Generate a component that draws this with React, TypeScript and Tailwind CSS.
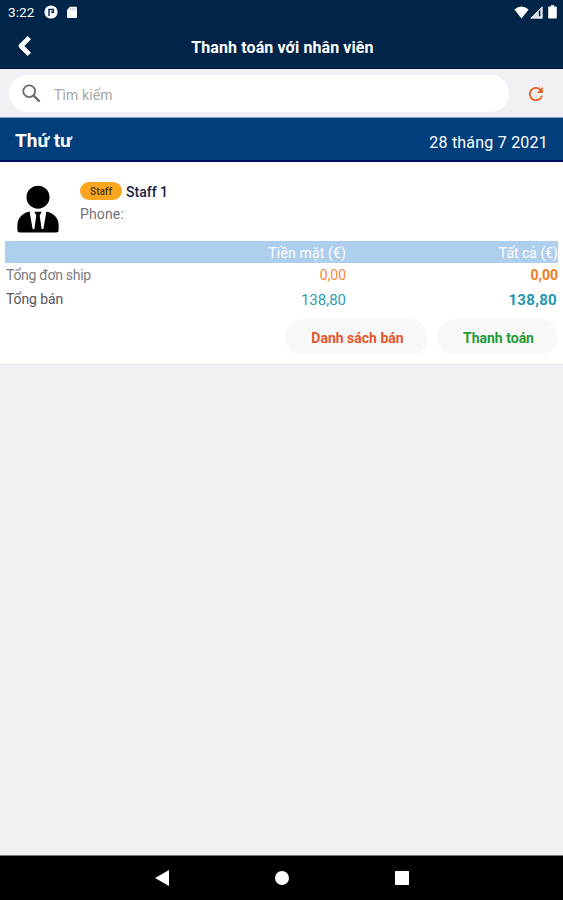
import React from "react";

function StatusBar() {
  return (
    <div className="flex h-6 items-center justify-between pl-2 pr-[6px] text-white">
      <div className="flex items-center">
        <span className="w-[27px] whitespace-nowrap text-[13.5px] leading-6 tracking-[0.1px]">3:22</span>
        <svg className="ml-[9px]" width="14" height="14" viewBox="0 0 14 14">
          <circle cx="7" cy="7" r="6.6" fill="#fff" />
          <path d="M5 11V4.5H9.4V7.2H7.2" fill="none" stroke="#002548" strokeWidth="1.4" />
        </svg>
        <svg className="ml-[8px]" width="12" height="13" viewBox="0 0 12 13">
          <path d="M4 .8H10Q11 .8 11 1.8V11Q11 12 10 12H2Q1 12 1 11V4Z" fill="#fff" />
          <path d="M4.5 2.2V4M6.6 2.2V4M8.7 2.2V4" stroke="#93a3b5" strokeWidth=".7" />
        </svg>
      </div>
      <div className="flex items-center">
        <svg width="15" height="13" viewBox="0 0 15 13">
          <path d="M.4 3.4Q7.4 -2.2 14.6 3.4L7.5 12.6Z" fill="#fff" />
        </svg>
        <svg className="ml-px" width="13" height="13" viewBox="0 0 13 13">
          <path d="M12.2 .8V12.2H.8Z" fill="#d8dde4" stroke="#fff" strokeWidth=".8" />
          <path d="M9.6 4.6V10.2" stroke="#002548" strokeWidth="1.5" />
        </svg>
        <svg className="ml-[5px]" width="9" height="14" viewBox="0 0 9 14">
          <path d="M3 0H6V1.4H8Q8.8 1.4 8.8 2.2V12.8Q8.8 13.6 8 13.6H1Q.2 13.6 .2 12.8V2.2Q.2 1.4 1 1.4H3Z" fill="#fff" />
        </svg>
      </div>
    </div>
  );
}

function Avatar() {
  return (
    <svg width="42" height="48" viewBox="0 0 42 48">
      <circle cx="21" cy="12.2" r="11.5" fill="#000" />
      <path d="M12.5 26.5C5 28.5.4 33 .4 40V45Q.4 47.5 3 47.5H39Q41.6 47.5 41.6 45V40C41.6 33 37 28.5 29.5 26.5Z" fill="#000" />
      <path d="M12.5 26 15.6 44H26.4L29.5 26Z" fill="#fff" />
      <path d="M17.4 26.8H24.6L22.7 30.6 24.6 44H17.4L19.3 30.6Z" fill="#000" />
    </svg>
  );
}

export default function App() {
  return (
    <div className="flex h-[900px] w-full flex-col overflow-hidden bg-[#f0f0f5] font-['Roboto',sans-serif]">
      <header className="h-[69px] shrink-0 border-b border-[#001638] bg-[#002548]">
        <StatusBar />
        <div className="grid h-11 grid-cols-[60px_1fr_60px] items-center">
          <svg className="ml-[17px]" width="15" height="22" viewBox="0 0 15 22">
            <path d="M12.3 2.6 4 11 12.3 19.4" fill="none" stroke="#fff" strokeWidth="4.8" strokeLinejoin="round" />
          </svg>
          <h1 className="whitespace-nowrap pl-[2px] pt-[3px] text-center text-[16px] font-bold leading-6 tracking-[0.1px] text-white">Thanh toán với nhân viên</h1>
        </div>
      </header>

      <div className="flex h-[49px] shrink-0 items-center border-b border-[#8ba2c4] bg-[#f1f0f5] pl-[9px]">
        <div className="flex h-[37px] w-[500px] items-center rounded-full bg-white pl-[13px]">
          <svg width="19" height="19" viewBox="0 0 19 19" fill="none" stroke="#68686c">
            <circle cx="7.2" cy="7.2" r="5.9" strokeWidth="1.8" />
            <path d="M11.6 11.6 17.6 17.6" strokeWidth="2.2" />
          </svg>
          <span className="ml-[13px] pt-[3px] text-[14px] leading-5 tracking-[0.1px] text-[#a7a7a9]">Tìm kiếm</span>
        </div>
        <svg className="ml-[18px] mt-px" width="18" height="18" viewBox="0 0 18 18">
          <path d="M13.5 4.7A6.2 6.2 0 1 0 15 10.7" fill="none" stroke="#e8622a" strokeWidth="1.8" />
          <path d="M15.8 1.8V8H9.8Z" fill="#e8622a" />
        </svg>
      </div>

      <div className="flex h-11 shrink-0 items-center justify-between border-b-2 border-[#00105f] bg-[#003e7c] px-[15px] text-white">
        <span className="pt-[3px] text-[19px] font-bold leading-6">Thứ tư</span>
        <span className="pt-[7px] text-[16px] leading-6 tracking-[0.22px]">28 tháng 7 2021</span>
      </div>

      <main className="h-[203px] shrink-0 border-b border-[#e7e7ea] bg-white px-[5px] pt-[19px]">
        <div className="flex h-[60px] pl-3">
          <div className="pt-1"><Avatar /></div>
          <div className="ml-[21px]">
            <div className="flex h-[20px] items-center">
              <span className="flex h-[18px] w-[42px] items-center justify-center rounded-full bg-[#f9a51d] text-[10px] font-medium text-[#4b381b]">Staff</span>
              <span className="ml-1 pt-px text-[14px] font-medium leading-5 text-[#17233f]">Staff 1</span>
            </div>
            <div className="mt-[3px] text-[14px] leading-5 tracking-[0.15px] text-[#737377]">Phone:</div>
          </div>
        </div>

        <div className="grid grid-cols-[1fr_171px_212px] text-[14px]">
          <div className="h-[22px] bg-[#aeceed]" />
          <div className="h-[22px] bg-[#aeceed] pt-[2px] text-right leading-5 tracking-[0.15px] text-white">Tiền mặt (€)</div>
          <div className="h-[22px] bg-[#aeceed] pt-[2px] text-right leading-5 text-white">Tất cả (€)</div>
          <div className="h-6 pl-px pt-px leading-[22px] tracking-[-0.28px] text-[#7b7b7e]">Tổng đơn ship</div>
          <div className="h-6 pt-px text-right leading-[22px] text-[#f28a3c]">0,00</div>
          <div className="h-6 pt-px text-right font-bold leading-[22px] text-[#f47b20]">0,00</div>
          <div className="h-[26px] pl-px pt-px leading-[22px] tracking-[-0.1px] text-[#565659]">Tổng bán</div>
          <div className="h-[26px] pt-px text-right text-[15px] leading-[24px] text-[#2b9eb3]">138,80</div>
          <div className="h-[26px] pr-px pt-px text-right text-[15px] font-bold leading-[24px] tracking-[0.3px] text-[#1e96b0]">138,80</div>
        </div>

        <div className="mt-[6px] flex justify-end gap-[9px] text-[14px] font-bold">
          <button className="h-9 w-[143px] rounded-full bg-[#f8f8f8] pl-[2px] pt-[2px] text-[#e6562b]">Danh sách bán</button>
          <button className="h-9 w-[121px] rounded-full bg-[#f8f8f8] pl-[2px] pt-[2px] text-[#279a38]">Thanh toán</button>
        </div>
      </main>

      <div className="flex-1" />

      <nav className="flex h-[45px] shrink-0 items-center justify-center gap-[106px] border-t border-[#777] bg-black">
        <svg width="14" height="16" viewBox="0 0 14 16"><path d="M14 0V16L0 8Z" fill="#fff" /></svg>
        <svg width="14" height="14" viewBox="0 0 14 14"><circle cx="7" cy="7" r="7" fill="#fff" /></svg>
        <svg width="14" height="14" viewBox="0 0 14 14"><rect width="14" height="14" rx=".5" fill="#fff" /></svg>
      </nav>
    </div>
  );
}
